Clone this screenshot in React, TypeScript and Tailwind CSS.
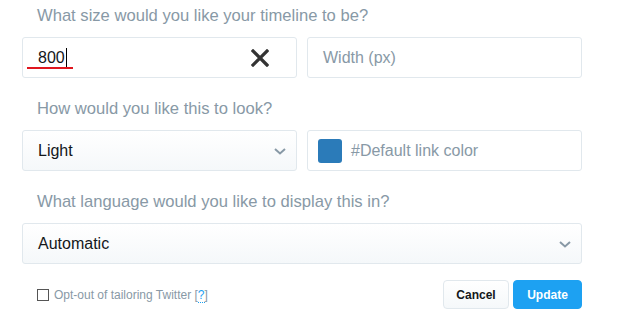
import React from "react";

const labelCls = "h-5 pl-[15px] text-[16.6px] leading-5 text-[#8899a6]";
const boxCls = "relative flex h-[41px] items-center rounded-[3px] border border-[#e1e8ed] text-[16px]";

function Chevron() {
  return (
    <svg width="12" height="7" viewBox="0 0 12 7" className="absolute right-[10px] top-[17px]">
      <path d="M1 1l5 4.5L11 1" fill="none" stroke="#8899a6" strokeWidth="2" />
    </svg>
  );
}

export default function App() {
  return (
    <div className="h-[326px] w-[619px] bg-white pl-[22px] pt-[6px] font-['Liberation_Sans',Arial,sans-serif]">
      <div className="w-[560px]">
        <div className={labelCls}>What size would you like your timeline to be?</div>
        <div className="mt-[11px] grid grid-cols-2 gap-[10px]">
          <div className={`${boxCls} bg-white pl-[15px] text-[#14171a]`}>
            <span>800</span>
            <span className="ml-[1px] h-[19px] w-px bg-black" />
            <span className="absolute left-[4px] top-[29px] h-[2px] w-[46px] bg-[#e0161e]" />
            <svg width="18" height="18" viewBox="0 0 18 18" className="absolute right-[27px] top-[11px]">
              <path d="M2 2l14 14M16 2L2 16" stroke="#333" strokeWidth="3.2" strokeLinecap="square" />
            </svg>
          </div>
          <div className={`${boxCls} bg-white pl-[15px] text-[#8899a6]`}>Width (px)</div>
        </div>

        <div className={`${labelCls} mt-[21px]`}>How would you like this to look?</div>
        <div className="mt-[11px] grid grid-cols-2 gap-[10px]">
          <div className={`${boxCls} bg-gradient-to-b from-white to-[#f5f8fa] pl-[15px] text-[#14171a]`}>
            Light
            <Chevron />
          </div>
          <div className={`${boxCls} gap-[9px] bg-white pl-[10px] text-[#8899a6]`}>
            <span className="h-6 w-6 rounded-[3px] bg-[#2b7bb9]" />
            #Default link color
          </div>
        </div>

        <div className={`${labelCls} mt-[21px]`}>What language would you like to display this in?</div>
        <div className={`${boxCls} mt-[11px] bg-gradient-to-b from-white to-[#f5f8fa] pl-[15px] text-[#14171a]`}>
          Automatic
          <Chevron />
        </div>

        <div className="mt-[16px] flex items-center justify-between">
          <label className="flex items-end gap-[5px] pl-[15px] text-[12px] leading-[14px] text-[#8899a6]">
            <span className="mb-[1px] h-3 w-3 border border-[#555] bg-white" />
            <span>
              Opt-out of tailoring Twitter [
              <span className="border-b border-dotted border-[#1da1f2] text-[#1da1f2]">?</span>]
            </span>
          </label>
          <div className="flex gap-[4px]">
            <button className="h-[29px] w-[66px] rounded-[4px] border border-[#e1e8ed] bg-gradient-to-b from-white to-[#f5f8fa] text-[12px] font-bold text-[#14171a]">
              Cancel
            </button>
            <button className="h-[29px] w-[69px] rounded-[4px] border border-[#1da1f2] bg-[#1da1f2] text-[12px] font-bold text-white">
              Update
            </button>
          </div>
        </div>
      </div>
    </div>
  );
}
